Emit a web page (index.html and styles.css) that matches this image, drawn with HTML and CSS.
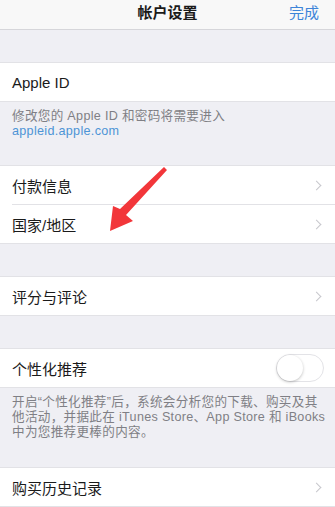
FILE: index.html
```html
<!DOCTYPE html>
<html lang="zh-CN">
<head>
    <meta charset="UTF-8">
    <meta name="viewport" content="width=device-width, initial-scale=1.0">
    <title>帐户设置</title>
    <link rel="stylesheet" href="styles.css">
</head>
<body>
    <div class="page">
        <div class="navbar">
            <div class="nav-title">帐户设置</div>
            <div class="nav-done">完成</div>
        </div>

        <div class="gap"></div>
        <div class="group">
            <div class="cell">Apple ID</div>
        </div>
        <div class="footer footer-id">
            修改您的 Apple ID 和密码将需要进入<br>
            <span class="link">appleid.apple.com</span>
        </div>

        <div class="group">
            <div class="cell">付款信息<span class="chevron"></span></div>
            <div class="cell">国家/地区<span class="chevron"></span></div>
        </div>

        <div class="gap"></div>
        <div class="group">
            <div class="cell">评分与评论<span class="chevron"></span></div>
        </div>

        <div class="gap"></div>
        <div class="group">
            <div class="cell">个性化推荐<span class="switch"><span class="knob"></span></span></div>
        </div>
        <div class="footer footer-rec">
            开启“个性化推荐”后，系统会分析您的下载、购买及其<br>
            他活动，并据此在 iTunes Store、App Store 和 iBooks<br>
            中为您推荐更棒的内容。
        </div>

        <div class="group">
            <div class="cell">购买历史记录<span class="chevron"></span></div>
        </div>

        <!-- 标注箭头 -->
        <svg class="arrow" width="335" height="507" viewBox="0 0 335 507">
            <polygon points="164,167 120,209 113,206 110,231 133,221 126,215 167,170" fill="#f2363a"/>
        </svg>
    </div>
</body>
</html>
```

FILE: styles.css
```css
body {
    margin: 0;
    background: #efeff4;
    font-family: "Noto Sans CJK SC", "Liberation Sans", sans-serif;
    color: #1a1a1a;
}
.page {
    position: relative;
    width: 335px;
    height: 507px;
    overflow: hidden;
}
.navbar {
    height: 29px;
    background: #f8f8f8;
    border-bottom: 1px solid #d6d6da;
    display: flex;
    justify-content: center;
    align-items: flex-start;
    position: relative;
}
.nav-title {
    font-size: 15px;
    font-weight: bold;
    line-height: 23px;
}
.nav-done {
    position: absolute;
    right: 16px;
    top: 0;
    font-size: 15px;
    line-height: 23px;
    color: #3d84d8;
}
.gap {
    height: 32px;
}
.group {
    background: #fff;
    border-top: 1px solid #e2e2e6;
    border-bottom: 1px solid #e2e2e6;
    padding-left: 12px;
}
.cell {
    height: 38px;
    display: flex;
    align-items: center;
    font-size: 15px;
    padding-right: 12px;
    font-family: "Liberation Sans", "Noto Sans CJK SC", sans-serif;
}
.cell + .cell {
    border-top: 1px solid #e2e2e6;
}
.chevron {
    margin-left: auto;
    width: 6px;
    height: 6px;
    border-top: 1.5px solid #c7c7cc;
    border-right: 1.5px solid #c7c7cc;
    transform: rotate(45deg);
    margin-right: 3px;
}
.switch {
    margin-left: auto;
    width: 46px;
    height: 26px;
    border: 1px solid #e3e3e7;
    border-radius: 14px;
    position: relative;
    margin-right: -1px;
}
.knob {
    position: absolute;
    left: 0;
    top: 0;
    width: 26px;
    height: 26px;
    border-radius: 50%;
    background: #fff;
    box-shadow: 0 1px 3px rgba(0, 0, 0, 0.25);
}
.footer {
    padding: 0 12px;
    font-size: 12.6px;
    line-height: 15px;
    letter-spacing: 0.3px;
    color: #7f7f85;
    font-family: "Liberation Sans", "Noto Sans CJK SC", sans-serif;
    white-space: nowrap;
    box-sizing: border-box;
}
.footer-id {
    padding-top: 7px;
    height: 63px;
}
.footer-rec {
    padding-top: 7px;
    height: 79px;
}
.link {
    color: #4d94d6;
}
.arrow {
    position: absolute;
    left: 0;
    top: 0;
}
```
